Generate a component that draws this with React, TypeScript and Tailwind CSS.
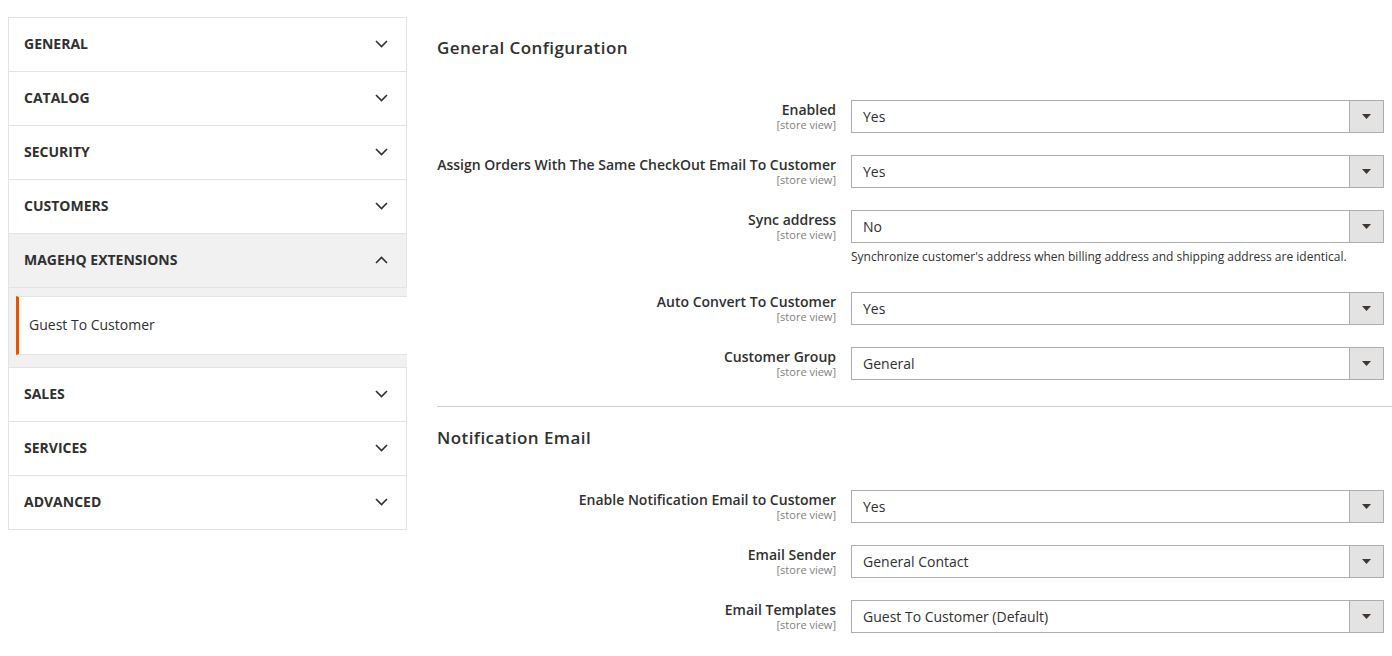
import React from "react";

const sections = ["GENERAL", "CATALOG", "SECURITY", "CUSTOMERS"];
const after = ["SALES", "SERVICES", "ADVANCED"];

function Chevron({ up = false }: { up?: boolean }) {
  return (
    <svg width="13" height="8" viewBox="0 0 13 8" className="shrink-0">
      <path
        d={up ? "M1 7 L6.5 1.5 L12 7" : "M1 1 L6.5 6.5 L12 1"}
        fill="none"
        stroke="#303030"
        strokeWidth="1.6"
      />
    </svg>
  );
}

function NavRow({ title, open = false }: { title: string; open?: boolean }) {
  return (
    <div
      className={`h-[54px] flex items-center justify-between pl-[15px] pr-[18px] pb-[2px] border-b border-[#e3e3e3] ${
        open ? "bg-[#f1f1f1]" : "bg-white"
      }`}
    >
      <span className="text-[14px] font-bold text-[#303030]">{title}</span>
      <Chevron up={open} />
    </div>
  );
}

function Select({ value }: { value: string }) {
  return (
    <div className="h-[33px] flex border border-[#adadad] bg-white">
      <div className="flex-1 flex items-center pl-[11px] text-[14px] text-[#303030]">
        {value}
      </div>
      <div className="w-[34px] flex items-center justify-center bg-[#e3e3e3] border-l border-[#adadad]">
        <svg width="9" height="5" viewBox="0 0 9 5">
          <path d="M0 0 H9 L4.5 5 Z" fill="#41362f" />
        </svg>
      </div>
    </div>
  );
}

type Field = { label: string; value: string; note?: string };

function FieldRow({ f }: { f: Field }) {
  return (
    <div className="flex mb-[22px]">
      <div className="w-[399px] shrink-0 text-right pt-[1px]">
        <div className="text-[14px] font-semibold text-[#303030] leading-[17px]">
          {f.label}
        </div>
        <div className="text-[11px] text-[#808080] leading-[13px]">[store view]</div>
      </div>
      <div className="ml-[15px] w-[533px]">
        <Select value={f.value} />
        {f.note && (
          <div className="text-[12px] text-[#303030] leading-[18px] pt-[5px] pb-[4px]">
            {f.note}
          </div>
        )}
      </div>
    </div>
  );
}

const general: Field[] = [
  { label: "Enabled", value: "Yes" },
  { label: "Assign Orders With The Same CheckOut Email To Customer", value: "Yes" },
  {
    label: "Sync address",
    value: "No",
    note: "Synchronize customer's address when billing address and shipping address are identical.",
  },
  { label: "Auto Convert To Customer", value: "Yes" },
  { label: "Customer Group", value: "General" },
];

const notification: Field[] = [
  { label: "Enable Notification Email to Customer", value: "Yes" },
  { label: "Email Sender", value: "General Contact" },
  { label: "Email Templates", value: "Guest To Customer (Default)" },
];

export default function App() {
  return (
    <div className="w-[1392px] h-[656px] overflow-hidden bg-white flex font-['Open_Sans',sans-serif]">
      <aside className="ml-[8px] mt-[17px] w-[399px] self-start border border-b-0 border-[#e3e3e3]">
        {sections.map((s) => (
          <NavRow key={s} title={s} />
        ))}
        <NavRow title="MAGEHQ EXTENSIONS" open />
        <div className="bg-[#f1f1f1] border-b border-[#e3e3e3] pt-[8px] pb-[12px] pl-[7px] -mr-[1px]">
          <div className="h-[59px] bg-white border-y border-[#e3e3e3] border-l-[3px] border-l-[#eb5202] flex items-center pl-[10px] pb-[2px] text-[14px] text-[#303030]">
            Guest To Customer
          </div>
        </div>
        {after.map((s) => (
          <NavRow key={s} title={s} />
        ))}
      </aside>

      <main className="ml-[30px] flex-1 pt-[36px]">
        <h2 className="text-[17px] font-semibold tracking-[0.025em] text-[#303030] leading-[24px] mb-[40px]">
          General Configuration
        </h2>
        {general.map((f) => (
          <FieldRow key={f.label} f={f} />
        ))}
        <div className="border-t border-[#cccccc] mt-[26px] mb-[19px]" />
        <h2 className="text-[17px] font-semibold tracking-[0.025em] text-[#303030] leading-[24px] mb-[40px]">
          Notification Email
        </h2>
        {notification.map((f) => (
          <FieldRow key={f.label} f={f} />
        ))}
      </main>
    </div>
  );
}
